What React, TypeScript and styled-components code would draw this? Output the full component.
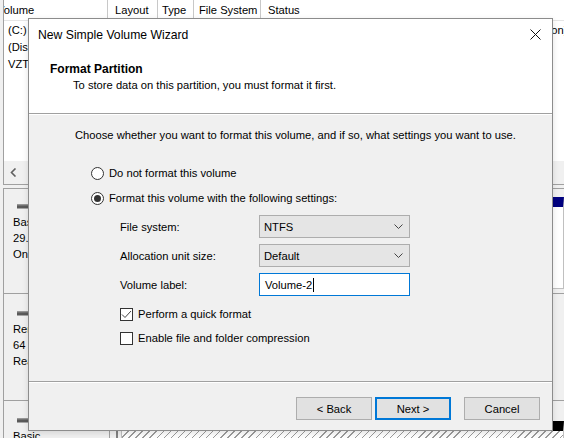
import styled, { createGlobalStyle } from "styled-components";

const GlobalStyle = createGlobalStyle`
  html, body {
    margin: 0;
    padding: 0;
  }
  body {
    width: 564px;
    height: 438px;
    overflow: hidden;
    background: #f0f0f0;
    font-family: "Liberation Sans", Arial, sans-serif;
    font-size: 11.2px;
    color: #000;
  }
`;

const Desktop = styled.div`
  position: relative;
  width: 564px;
  height: 438px;
  overflow: hidden;
  background: #f0f0f0;
  display: flex;
  flex-direction: column;
`;

/* ---------- Disk Management window behind the wizard ---------- */

const VolumeList = styled.div`
  margin-left: 3px;
  height: 184px;
  flex-shrink: 0;
  border-left: 1px solid #a0a0a0;
  border-bottom: 1px solid #a0a0a0;
  display: flex;
  flex-direction: column;
  background: #fff;
`;

const HeaderRow = styled.div`
  display: flex;
  height: 21px;
  flex-shrink: 0;
  border-bottom: 1px solid #e5e5e5;
  box-sizing: border-box;
`;

const HeaderCell = styled.div<{ $w?: number; $indent?: number; $last?: boolean }>`
  width: ${(p) => (p.$w ? `${p.$w}px` : "auto")};
  flex: ${(p) => (p.$w ? "0 0 auto" : "1")};
  box-sizing: border-box;
  padding-left: 7px;
  text-indent: ${(p) => p.$indent ?? 0}px;
  border-right: ${(p) => (p.$last ? "none" : "1px solid #c8c8c8")};
  line-height: 20px;
  white-space: nowrap;
  overflow: hidden;
`;

const Rows = styled.div`
  flex: 1;
  padding-top: 1px;
  display: flex;
  flex-direction: column;
`;

const VolumeRow = styled.div`
  display: flex;
  height: 17px;
  line-height: 17px;
  white-space: nowrap;
`;

const VolumeCell = styled.div<{ $w?: number }>`
  width: ${(p) => (p.$w ? `${p.$w}px` : "auto")};
  flex: ${(p) => (p.$w ? "0 0 auto" : "1")};
  padding-left: 4px;
  box-sizing: border-box;
  overflow: hidden;
`;

const StatusCell = styled(VolumeCell)`
  padding-left: 8px;
`;

const HScroll = styled.div`
  height: 23px;
  flex-shrink: 0;
  background: #f0f0f0;
  display: flex;
  align-items: center;
  padding-left: 6px;
`;

const DiskPane = styled.div`
  margin-left: 3px;
  margin-top: 3px;
  flex: 1;
  border-left: 1px solid #a0a0a0;
  border-top: 1px solid #a0a0a0;
  display: flex;
  flex-direction: column;
  gap: 2px;
  background: #f0f0f0;
`;

const DiskRow = styled.div`
  display: flex;
  height: 104px;
  flex-shrink: 0;
  border-bottom: 1px solid #a0a0a0;
`;

const DiskLabel = styled.div`
  width: 106px;
  flex-shrink: 0;
  box-sizing: border-box;
  padding: 15px 0 0 9px;
  border-right: 1px solid #a0a0a0;
  line-height: 16px;
  white-space: nowrap;
  overflow: hidden;
`;

const DiskIcon = styled.svg`
  display: block;
  margin: 0 0 5px 4px;
`;

const Partitions = styled.div<{ $top: number }>`
  flex: 1;
  display: flex;
  margin-left: 6px;
  border-left: 2px solid #808080;
  padding: ${(p) => p.$top}px 0 4px 3px;
  background: #f0f0f0;
`;

const Partition = styled.div<{ $bar: string; $free?: boolean }>`
  flex: 1;
  border: 1px solid #c0c0c0;
  border-top: 10px solid ${(p) => p.$bar};
  background: ${(p) =>
    p.$free
      ? "repeating-linear-gradient(135deg, #fff 0 4px, #9c9c9c 4px 5px)"
      : "#fff"};
  padding: 40px 0 0 2px;
  white-space: nowrap;
  overflow: hidden;
`;

/* ---------- Wizard dialog ---------- */

const Dialog = styled.div`
  position: absolute;
  left: 28px;
  top: 18px;
  width: 525px;
  height: 413px;
  box-sizing: border-box;
  border: 1px solid #8c8c8c;
  background: #f0f0f0;
  display: flex;
  flex-direction: column;
  box-shadow: 0 2px 6px rgba(0, 0, 0, 0.12);
`;

const TitleBar = styled.div`
  height: 31px;
  flex-shrink: 0;
  background: #fff;
  display: flex;
  align-items: center;
  padding-left: 9px;
`;

const Title = styled.div`
  flex: 1;
  font-size: 12.2px;
`;

const CloseButton = styled.div`
  width: 34px;
  height: 31px;
  display: flex;
  align-items: center;
  justify-content: center;
`;

const Banner = styled.div`
  height: 64px;
  flex-shrink: 0;
  box-sizing: border-box;
  background: #fff;
  padding: 11px 0 0 21px;
  border-bottom: 1px solid #a0a0a0;
  box-shadow: 0 1px 0 #fff;
  line-height: 16px;
`;

const BannerTitle = styled.div`
  font-weight: bold;
  font-size: 12px;
`;

const BannerText = styled.div`
  padding-left: 23px;
`;

const Body = styled.div`
  flex: 1;
  padding: 14px 0 0 46px;
  display: flex;
  flex-direction: column;
`;

const Intro = styled.div`
  line-height: 15px;
`;

const Options = styled.div`
  margin: 21px 0 0 16px;
  display: flex;
  flex-direction: column;
  gap: 7px;
`;

const Choice = styled.label`
  display: flex;
  align-items: center;
  gap: 5px;
  height: 18px;
  white-space: nowrap;
`;

const Radio = styled.span<{ $on?: boolean }>`
  width: 13px;
  height: 13px;
  box-sizing: border-box;
  border: 1px solid #333;
  border-radius: 50%;
  background: #fff;
  display: flex;
  align-items: center;
  justify-content: center;
  &::after {
    content: "";
    display: ${(p) => (p.$on ? "block" : "none")};
    width: 7px;
    height: 7px;
    border-radius: 50%;
    background: #333;
  }
`;

const Settings = styled.div`
  margin: 1px 0 0 29px;
  display: flex;
  flex-direction: column;
`;

const Fields = styled.div`
  display: grid;
  grid-template-columns: 139px 151px;
  grid-auto-rows: 23px;
  row-gap: 6px;
  align-items: center;
`;

const FieldLabel = styled.div`
  white-space: nowrap;
`;

const Select = styled.div`
  height: 23px;
  box-sizing: border-box;
  border: 1px solid #adadad;
  background: #e5e5e5;
  display: flex;
  align-items: center;
  justify-content: space-between;
  padding: 0 6px 0 4px;
`;

const TextInput = styled.div`
  height: 23px;
  box-sizing: border-box;
  border: 1px solid #0078d7;
  background: #fff;
  display: flex;
  align-items: center;
  padding-left: 5px;
`;

const Caret = styled.span`
  width: 1px;
  height: 14px;
  background: #000;
  margin-left: 1px;
`;

const Checks = styled.div`
  margin-top: 9px;
  display: flex;
  flex-direction: column;
  gap: 6px;
`;

const CheckBox = styled.span`
  width: 13px;
  height: 13px;
  box-sizing: border-box;
  border: 1px solid #333;
  background: #fff;
  display: flex;
  align-items: center;
  justify-content: center;
`;

const Footer = styled.div`
  height: 49px;
  flex-shrink: 0;
  box-sizing: border-box;
  border-top: 1px solid #a0a0a0;
  box-shadow: inset 0 1px 0 #fff;
  display: flex;
  justify-content: flex-end;
  align-items: flex-start;
  padding: 15px 12px 0 0;
`;

const Button = styled.div<{ $primary?: boolean; $gap?: number }>`
  width: 76px;
  height: 23px;
  box-sizing: border-box;
  margin-left: ${(p) => p.$gap ?? 0}px;
  border: 1px solid ${(p) => (p.$primary ? "#0078d7" : "#adadad")};
  box-shadow: ${(p) => (p.$primary ? "inset 0 0 0 1px #0078d7" : "none")};
  background: #e1e1e1;
  display: flex;
  align-items: center;
  justify-content: center;
`;

const Chevron = () => (
  <svg width="9" height="5" viewBox="0 0 9 5">
    <path d="M0.5 0.5 L4.5 4.5 L8.5 0.5" fill="none" stroke="#444" strokeWidth="1" />
  </svg>
);

const Drive = () => (
  <DiskIcon width="14" height="5" viewBox="0 0 14 5">
    <rect x="0" y="0.5" width="14" height="4" fill="#5a5a5a" />
    <rect x="0" y="0.5" width="14" height="1" fill="#8a8a8a" />
    <rect x="11" y="2" width="2" height="2" fill="#3cc43c" />
  </DiskIcon>
);

const volumes = [
  ["(C:)", "Simple", "Basic", "NTFS", "Healthy (Boot, Page File, Crash Dump, Basic Data Partition)"],
  ["(Disk 1 partition 2)", "Simple", "Basic", "", "Healthy (EFI System Partition)"],
  ["VZT (D:)", "Simple", "Basic", "FAT32", "Healthy (Primary Partition)"],
];

const disks = [
  { lines: ["Basic", "29.81 GB", "Online"], top: 8, bar: "#00007f", free: false, text: "Healthy (Boot, Page File, Crash Dump, Basic Data Partition)" },
  { lines: ["Removable", "64 MB", "Read Only"], top: 8, bar: "", free: false, text: "" },
  { lines: ["Basic", "14.91 GB", "Online"], top: 18, bar: "#000", free: true, text: "" },
];

export default function App() {
  return (
    <>
      <GlobalStyle />
      <Desktop>
        <VolumeList>
          <HeaderRow>
            <HeaderCell $w={104} $indent={-14}>Volume</HeaderCell>
            <HeaderCell $w={50}>Layout</HeaderCell>
            <HeaderCell $w={36} $indent={-3}>Type</HeaderCell>
            <HeaderCell $w={67} $indent={-2}>File System</HeaderCell>
            <HeaderCell $last>Status</HeaderCell>
          </HeaderRow>
          <Rows>
            {volumes.map((v) => (
              <VolumeRow key={v[0]}>
                <VolumeCell $w={104}>{v[0]}</VolumeCell>
                <VolumeCell $w={50}>{v[1]}</VolumeCell>
                <VolumeCell $w={36}>{v[2]}</VolumeCell>
                <VolumeCell $w={67}>{v[3]}</VolumeCell>
                <StatusCell>{v[4]}</StatusCell>
              </VolumeRow>
            ))}
          </Rows>
          <HScroll>
            <svg width="7" height="9" viewBox="0 0 7 9">
              <path d="M5.5 0.5 L1.5 4.5 L5.5 8.5" fill="none" stroke="#606060" strokeWidth="1.6" />
            </svg>
          </HScroll>
        </VolumeList>

        <DiskPane>
          {disks.map((d, i) => (
            <DiskRow key={i}>
              <DiskLabel>
                <Drive />
                {d.lines.map((l) => (
                  <div key={l}>{l}</div>
                ))}
              </DiskLabel>
              <Partitions $top={d.top}>
                {d.bar && (
                  <Partition $bar={d.bar} $free={d.free}>
                    {d.text}
                  </Partition>
                )}
              </Partitions>
            </DiskRow>
          ))}
        </DiskPane>

        <Dialog>
          <TitleBar>
            <Title>New Simple Volume Wizard</Title>
            <CloseButton>
              <svg width="11" height="11" viewBox="0 0 11 11">
                <path d="M0.5 0.5 L10.5 10.5 M10.5 0.5 L0.5 10.5" stroke="#111" strokeWidth="1" />
              </svg>
            </CloseButton>
          </TitleBar>

          <Banner>
            <BannerTitle>Format Partition</BannerTitle>
            <BannerText>To store data on this partition, you must format it first.</BannerText>
          </Banner>

          <Body>
            <Intro>
              Choose whether you want to format this volume, and if so, what settings you want to use.
            </Intro>
            <Options>
              <Choice>
                <Radio />
                Do not format this volume
              </Choice>
              <Choice>
                <Radio $on />
                Format this volume with the following settings:
              </Choice>
              <Settings>
                <Fields>
                  <FieldLabel>File system:</FieldLabel>
                  <Select>
                    NTFS
                    <Chevron />
                  </Select>
                  <FieldLabel>Allocation unit size:</FieldLabel>
                  <Select>
                    Default
                    <Chevron />
                  </Select>
                  <FieldLabel>Volume label:</FieldLabel>
                  <TextInput>
                    Volume-2
                    <Caret />
                  </TextInput>
                </Fields>
                <Checks>
                  <Choice>
                    <CheckBox>
                      <svg width="11" height="9" viewBox="0 0 11 9">
                        <path d="M1 4.5 L4 7.5 L10 1" fill="none" stroke="#444" strokeWidth="1" />
                      </svg>
                    </CheckBox>
                    Perform a quick format
                  </Choice>
                  <Choice>
                    <CheckBox />
                    Enable file and folder compression
                  </Choice>
                </Checks>
              </Settings>
            </Options>
          </Body>

          <Footer>
            <Button>&lt; Back</Button>
            <Button $primary $gap={3}>
              Next &gt;
            </Button>
            <Button $gap={13}>Cancel</Button>
          </Footer>
        </Dialog>
      </Desktop>
    </>
  );
}
